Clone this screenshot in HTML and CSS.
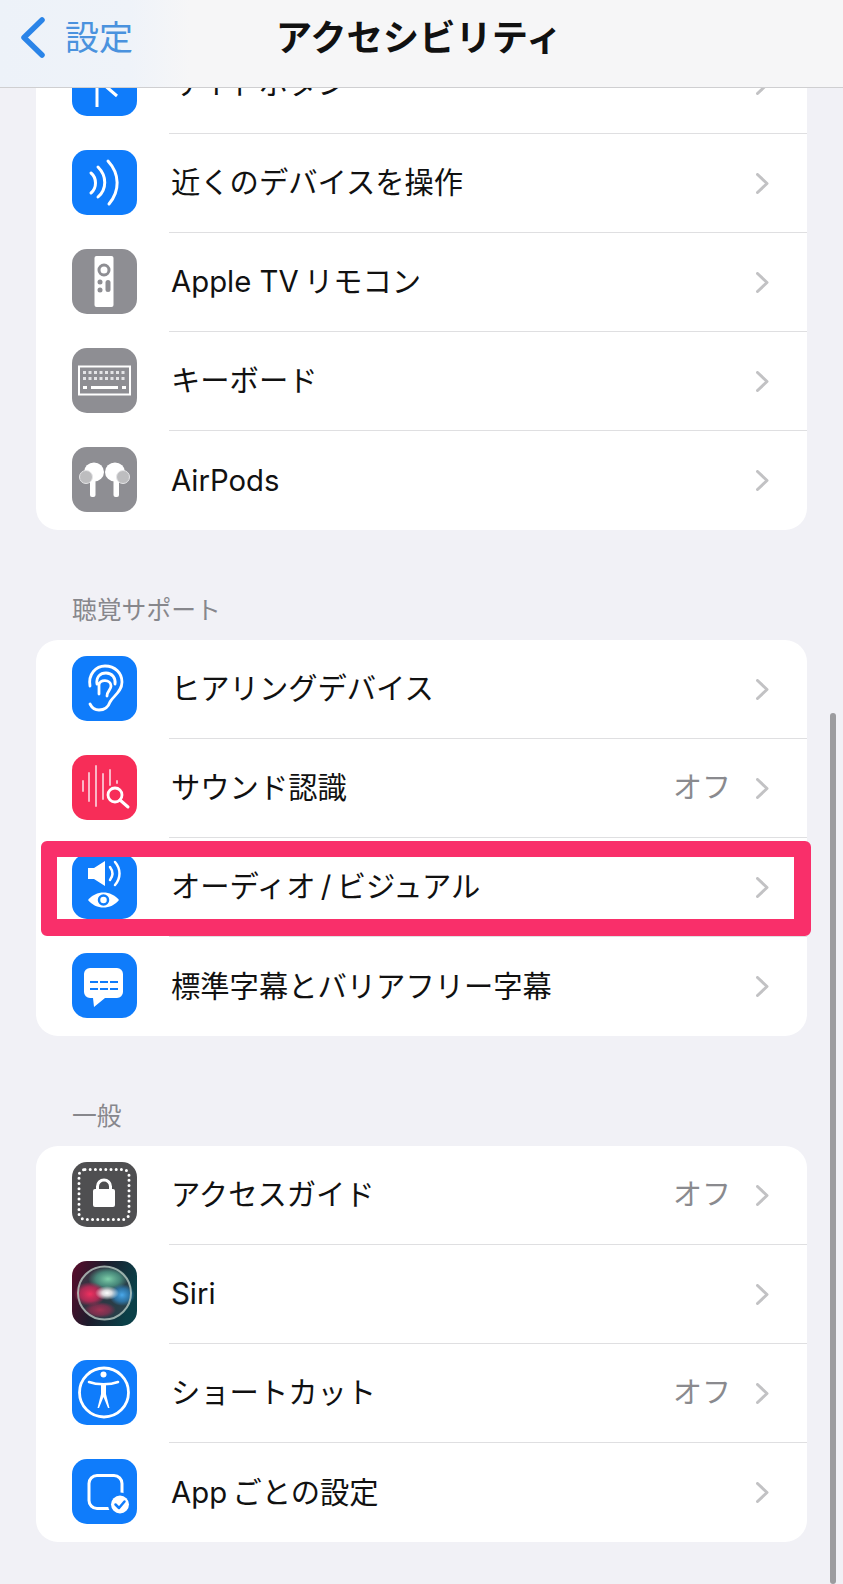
FILE: index.html
```html
<!DOCTYPE html>
<html lang="ja">
<head>
    <meta charset="UTF-8">
    <meta name="viewport" content="width=device-width, initial-scale=1.0">
    <title>アクセシビリティ</title>
    <link rel="stylesheet" href="styles.css">
</head>
<body>
<div class="screen">
    <header class="nav">
        <div class="back">
            <svg class="back-arrow" viewBox="0 0 25 41"><path d="M22 3 L4 20.5 L22 38"/></svg>
            <span>設定</span>
        </div>
        <h1>アクセシビリティ</h1>
    </header>

    <main class="content">
        <div class="card">
            <div class="row">
                <svg class="icon" viewBox="0 0 65 65"><rect width="65" height="65" rx="15" fill="#0f7cfb"/><path d="M25 28 V56 M30 32 L45 45 M40 32 H50" fill="none" stroke="#fff" stroke-width="3"/></svg>
                <div class="row-body"><span class="label">サイドボタン</span><svg class="chevron" viewBox="0 0 13 21"><path d="M1.5 1.5 L11 10.5 L1.5 19.5"/></svg></div>
            </div>
            <div class="row">
                <svg class="icon" viewBox="0 0 65 65"><rect width="65" height="65" rx="15" fill="#0f7cfb"/><path d="M19 23 C25 28 25 38 19 43 M26 17 C35 26 35 39 26 47 M36 11 C48 24 48 41 37 54" fill="none" stroke="#fff" stroke-width="3" stroke-linecap="round"/></svg>
                <div class="row-body"><span class="label">近くのデバイスを操作</span><svg class="chevron" viewBox="0 0 13 21"><path d="M1.5 1.5 L11 10.5 L1.5 19.5"/></svg></div>
            </div>
            <div class="row">
                <svg class="icon" viewBox="0 0 65 65"><rect width="65" height="65" rx="15" fill="#8e8e93"/><rect x="22.5" y="7" width="19" height="51" rx="2" fill="#fff"/><circle cx="32" cy="21" r="5" fill="none" stroke="#8e8e93" stroke-width="3"/><circle cx="28" cy="33" r="2.500" fill="#8e8e93"/><circle cx="28" cy="41" r="2.500" fill="#8e8e93"/><rect x="33.500" y="31" width="5" height="12" rx="2.500" fill="#8e8e93"/></svg>
                <div class="row-body"><span class="label">Apple TV&#8201;リモコン</span><svg class="chevron" viewBox="0 0 13 21"><path d="M1.5 1.5 L11 10.5 L1.5 19.5"/></svg></div>
            </div>
            <div class="row">
                <svg class="icon" viewBox="0 0 65 65"><rect width="65" height="65" rx="15" fill="#8e8e93"/><rect x="7" y="18.500" width="51" height="28" fill="none" stroke="#fff" stroke-width="2"/><path d="M11 24.500 H55 M11 30.500 H55" stroke="#e4e4e6" stroke-width="3" stroke-dasharray="3 2.500" fill="none"/><path d="M11 39.500 H15 M19 39.500 H46 M50 39.500 H54" stroke="#fff" stroke-width="3" fill="none"/></svg>
                <div class="row-body"><span class="label">キーボード</span><svg class="chevron" viewBox="0 0 13 21"><path d="M1.5 1.5 L11 10.5 L1.5 19.5"/></svg></div>
            </div>
            <div class="row">
                <svg class="icon" viewBox="0 0 65 65"><rect width="65" height="65" rx="15" fill="#8e8e93"/><rect x="18" y="30" width="5.500" height="20" rx="2" fill="#fff"/><rect x="41.500" y="30" width="5.500" height="20" rx="2" fill="#fff"/><ellipse cx="22" cy="25" rx="10" ry="9.500" fill="#fff"/><ellipse cx="43" cy="25" rx="10" ry="9.500" fill="#fff"/><circle cx="14" cy="30" r="6.500" fill="#bdbdbf" stroke="#e6e6e8"/><circle cx="51" cy="30" r="6.500" fill="#bdbdbf" stroke="#e6e6e8"/></svg>
                <div class="row-body last"><span class="label">AirPods</span><svg class="chevron" viewBox="0 0 13 21"><path d="M1.5 1.5 L11 10.5 L1.5 19.5"/></svg></div>
            </div>
        </div>

        <h2 class="section-title">聴覚サポート</h2>
        <div class="card">
            <div class="row">
                <svg class="icon" viewBox="0 0 65 65"><rect width="65" height="65" rx="15" fill="#0f7cfb"/><path d="M18 30 C16 18 24 10 33 10 C43 10 50 17 50 26 C50 36 41 40 38 46 C36 52 31 54 27 54 C23 54 20 52 18 48 M25 28 C24 21 28 17 34 17 C40 17 44 22 43 28 M27 38 V29 C27 23 39 23 39 30 C39 34 35 35 35 40" fill="none" stroke="#fff" stroke-width="2.800" stroke-linecap="round"/></svg>
                <div class="row-body"><span class="label">ヒアリングデバイス</span><svg class="chevron" viewBox="0 0 13 21"><path d="M1.5 1.5 L11 10.5 L1.5 19.5"/></svg></div>
            </div>
            <div class="row">
                <svg class="icon" viewBox="0 0 65 65"><rect width="65" height="65" rx="15" fill="#f72d58"/><path d="M11 26 V36 M17 18 V46 M24 11 V51 M31 19 V44 M38 15 V30 M45 26 V28" fill="none" stroke="#fbb6c6" stroke-width="2" stroke-linecap="round"/><circle cx="43" cy="40" r="7" fill="none" stroke="#fff" stroke-width="2.800"/><path d="M48 45 L56 52" stroke="#fff" stroke-width="3" stroke-linecap="round"/></svg>
                <div class="row-body"><span class="label">サウンド認識</span><span class="value">オフ</span><svg class="chevron" viewBox="0 0 13 21"><path d="M1.5 1.5 L11 10.5 L1.5 19.5"/></svg></div>
            </div>
            <div class="row">
                <svg class="icon" viewBox="0 0 65 65"><rect width="65" height="65" rx="15" fill="#0f7cfb"/><path d="M16 14 H22 L33 7 V32 L22 25 H16 Z" fill="#fff"/><path d="M38 13 C41 17 41 22 38 26 M43 8 C49 15 49 24 43 31" fill="none" stroke="#fff" stroke-width="2.500" stroke-linecap="round"/><path d="M16 46 C24 36 39 36 47 46 C39 56 24 56 16 46 Z" fill="#fff"/><circle cx="31.500" cy="46" r="4.500" fill="#fff" stroke="#0f7cfb" stroke-width="2.500"/></svg>
                <div class="row-body"><span class="label">オーディオ&#8201;/&#8201;ビジュアル</span><svg class="chevron" viewBox="0 0 13 21"><path d="M1.5 1.5 L11 10.5 L1.5 19.5"/></svg></div>
            </div>
            <div class="row">
                <svg class="icon" viewBox="0 0 65 65"><rect width="65" height="65" rx="15" fill="#0f7cfb"/><path d="M18 15 H45 A6 6 0 0 1 51 21 V39 A6 6 0 0 1 45 45 H33 L22 54 L21 45 H18 A6 6 0 0 1 12 39 V21 A6 6 0 0 1 18 15 Z" fill="#fff"/><path d="M18 29 H46 M18 36 H46" stroke="#0f7cfb" stroke-width="1.800" stroke-dasharray="8 2" fill="none"/></svg>
                <div class="row-body last"><span class="label">標準字幕とバリアフリー字幕</span><svg class="chevron" viewBox="0 0 13 21"><path d="M1.5 1.5 L11 10.5 L1.5 19.5"/></svg></div>
            </div>
        </div>

        <h2 class="section-title">一般</h2>
        <div class="card">
            <div class="row">
                <svg class="icon" viewBox="0 0 65 65"><rect width="65" height="65" rx="15" fill="#4f4f51"/><rect x="7" y="7.500" width="50" height="50" rx="6" fill="none" stroke="#fff" stroke-width="3" stroke-linecap="round" stroke-dasharray="0 5.200"/><rect x="21" y="27" width="22" height="18" rx="2" fill="#fff"/><path d="M25.500 28 V24.500 A6.500 6.500 0 0 1 38.500 24.500 V28" fill="none" stroke="#fff" stroke-width="3"/></svg>
                <div class="row-body"><span class="label">アクセスガイド</span><span class="value">オフ</span><svg class="chevron" viewBox="0 0 13 21"><path d="M1.5 1.5 L11 10.5 L1.5 19.5"/></svg></div>
            </div>
            <div class="row">
                <svg class="icon" viewBox="0 0 65 65">
                    <defs>
                        <linearGradient id="siri-bg" x1="0" y1="0" x2="1" y2="0.300"><stop offset="0" stop-color="#5c0c2c"/><stop offset="0.500" stop-color="#1c1c2c"/><stop offset="1" stop-color="#0b4048"/></linearGradient>
                        <radialGradient id="siri-red"><stop offset="0" stop-color="#f0305f"/><stop offset="0.600" stop-color="#c92a5a" stop-opacity="0.800"/><stop offset="1" stop-color="#c92a5a" stop-opacity="0"/></radialGradient>
                        <radialGradient id="siri-blue"><stop offset="0" stop-color="#4aa8ea"/><stop offset="0.600" stop-color="#2f7fb8" stop-opacity="0.800"/><stop offset="1" stop-color="#2f7fb8" stop-opacity="0"/></radialGradient>
                        <radialGradient id="siri-green"><stop offset="0" stop-color="#7fd0aa"/><stop offset="0.600" stop-color="#4f9c88" stop-opacity="0.800"/><stop offset="1" stop-color="#4f9c88" stop-opacity="0"/></radialGradient>
                        <radialGradient id="siri-core"><stop offset="0" stop-color="#fff"/><stop offset="0.400" stop-color="#fff" stop-opacity="0.800"/><stop offset="1" stop-color="#fff" stop-opacity="0"/></radialGradient>
                    </defs>
                    <rect width="65" height="65" rx="15" fill="url(#siri-bg)"/>
                    <circle cx="32.500" cy="32" r="26" fill="#3a4650" fill-opacity="0.600"/>
                    <ellipse cx="36" cy="18" rx="20" ry="12" fill="url(#siri-green)"/>
                    <ellipse cx="18" cy="33" rx="16" ry="12" fill="url(#siri-red)"/>
                    <ellipse cx="50" cy="34" rx="13" ry="11" fill="url(#siri-blue)"/>
                    <ellipse cx="28" cy="49" rx="16" ry="8" fill="url(#siri-red)" opacity="0.600"/>
                    <circle cx="32.500" cy="32" r="26.500" fill="none" stroke="#b9cbc4" stroke-opacity="0.800" stroke-width="2"/>
                    <ellipse cx="35" cy="32" rx="12" ry="7" fill="url(#siri-core)"/>
                </svg>
                <div class="row-body"><span class="label">Siri</span><svg class="chevron" viewBox="0 0 13 21"><path d="M1.5 1.5 L11 10.5 L1.5 19.5"/></svg></div>
            </div>
            <div class="row">
                <svg class="icon" viewBox="0 0 65 65"><rect width="65" height="65" rx="15" fill="#0f7cfb"/><circle cx="32" cy="32.500" r="24.500" fill="none" stroke="#fff" stroke-width="2.800"/><circle cx="31.500" cy="14.500" r="3" fill="#fff"/><path d="M17 22 C25 25 38 25 46 22" fill="none" stroke="#fff" stroke-width="2.600" stroke-linecap="round"/><path d="M29 24 H34 V34 L37.500 48 H36 L31.500 37 L27 48 H25.500 L29 34 Z" fill="#fff"/></svg>
                <div class="row-body"><span class="label">ショートカット</span><span class="value">オフ</span><svg class="chevron" viewBox="0 0 13 21"><path d="M1.5 1.5 L11 10.5 L1.5 19.5"/></svg></div>
            </div>
            <div class="row">
                <svg class="icon" viewBox="0 0 65 65"><rect width="65" height="65" rx="15" fill="#0f7cfb"/><rect x="17" y="16.500" width="33" height="33" rx="8" fill="none" stroke="#fff" stroke-width="3"/><circle cx="48" cy="45.500" r="12" fill="#0f7cfb"/><circle cx="48" cy="45.500" r="9" fill="#fff"/><path d="M43.500 45.500 L47 49 L52.500 42.500" fill="none" stroke="#0f7cfb" stroke-width="2.500" stroke-linecap="round" stroke-linejoin="round"/></svg>
                <div class="row-body last"><span class="label">App&#8201;ごとの設定</span><svg class="chevron" viewBox="0 0 13 21"><path d="M1.5 1.5 L11 10.5 L1.5 19.5"/></svg></div>
            </div>
        </div>
    </main>

    <div class="scrollbar"></div>
    <div class="highlight"></div>
</div>
</body>
</html>
```

FILE: styles.css
```css
* { box-sizing: border-box; }
html, body { margin: 0; padding: 0; }
body { font-family: Inter, "Noto Sans CJK JP", sans-serif; background: #f1f1f6; color: #111; }

.screen { position: relative; width: 843px; height: 1584px; overflow: hidden; }

/* nav bar sits on top of the scrolled list */
.nav { position: absolute; top: 0; left: 0; width: 100%; height: 88px; display: flex; align-items: center; justify-content: center; background: linear-gradient(to right, #edf2f9 0, #eff3f9 130px, #f6f6f7 190px); border-bottom: 1px solid #cfcfd1; z-index: 2; }
.nav h1 { margin: 0 5px 12px 0; font-size: 36.300px; font-weight: 700; line-height: 44px; }
.back { position: absolute; left: 20px; top: 17px; display: flex; align-items: center; gap: 20px; font-size: 34px; line-height: 41px; color: #4a92de; }
.back-arrow { width: 25px; height: 41px; fill: none; stroke: #2a84e8; stroke-width: 5.500; stroke-linecap: round; stroke-linejoin: round; }

.content { padding: 35px 36px 0 36px; }
.card { width: 771px; background: #fff; border-radius: 22px; overflow: hidden; }
.section-title { height: 110px; margin: 0; padding: 0 0 15px 36px; display: flex; align-items: flex-end; font-size: 24.800px; font-weight: 400; line-height: 30px; color: #87878c; }

.row { display: flex; align-items: stretch; height: 99px; padding-left: 36px; }
.icon { flex: none; width: 65px; height: 65px; margin: 16px 32px 0 0; }
.row-body { flex: 1; display: flex; align-items: center; padding: 0 38px 0 2px; border-bottom: 1px solid #dfdfe1; }
.row-body.last { border-bottom: 0; }
.label { flex: 1; font-size: 29.300px; line-height: 40px; white-space: nowrap; }
.value { font-size: 29px; line-height: 40px; color: #8a8a8e; margin-right: 25px; }
.chevron { flex: none; width: 13px; height: 21px; fill: none; stroke: #c2c2c4; stroke-width: 3; stroke-linecap: round; stroke-linejoin: round; }

.scrollbar { position: absolute; left: 830px; top: 713px; bottom: 0; width: 6px; border-radius: 3px; background: #9c9c9f; }
.highlight { position: absolute; left: 41px; top: 841px; width: 770px; height: 95px; border-style: solid; border-color: #f92f6a; border-width: 16px 17px 17px 16px; border-radius: 6px; }
```
